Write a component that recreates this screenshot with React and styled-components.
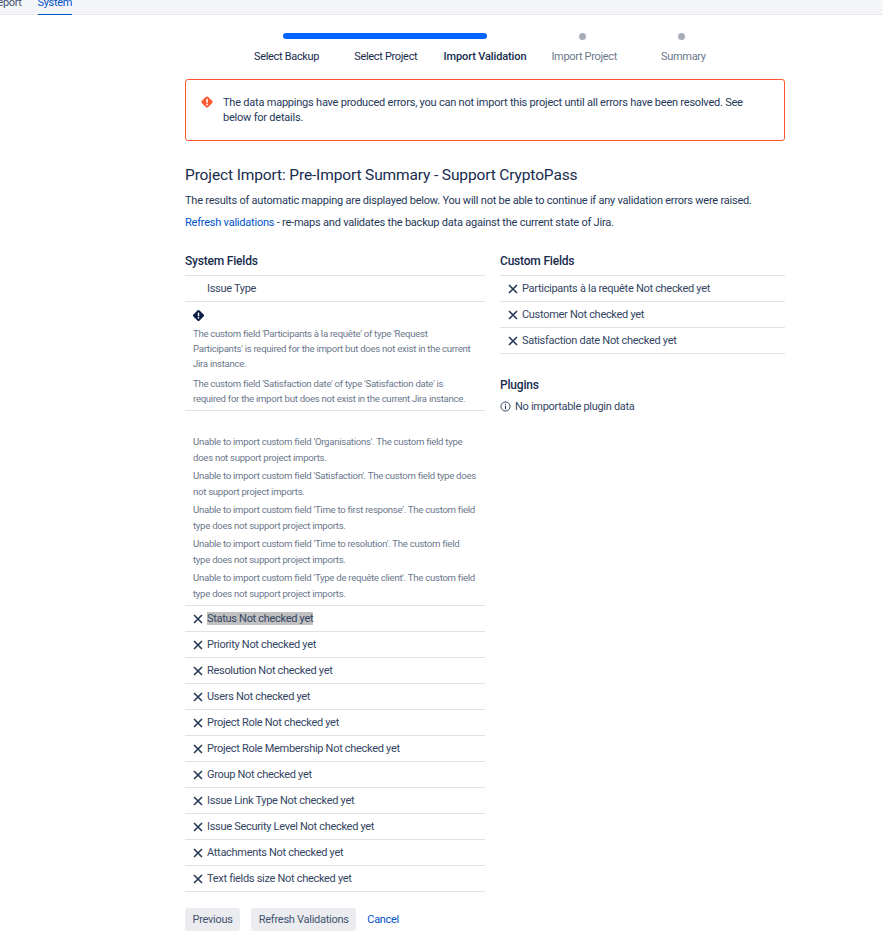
import React from "react";
import styled, { createGlobalStyle } from "styled-components";

const GlobalStyle = createGlobalStyle`
  html, body {
    margin: 0;
    padding: 0;
    height: 932px;
    overflow: hidden;
    background: #fff;
    font-family: Roboto, "Noto Sans", sans-serif;
    font-size: 11px;
    letter-spacing: -0.3px;
    color: #172b4d;
  }
`;

const TopBar = styled.div`
  height: 14px;
  display: flex;
  align-items: flex-start;
  background: #f4f5f7;
  border-bottom: 1px solid #e6e8ec;
`;

const Tab = styled.div`
  height: 15px;
  margin-left: ${(p) => p.$left}px;
  line-height: 5px;
  font-size: 11px;
  letter-spacing: -0.35px;
  color: ${(p) => (p.$active ? "#0052cc" : "#42526e")};
  overflow: hidden;
  box-shadow: ${(p) => (p.$active ? "inset 0 -1px 0 #0052cc" : "none")};
`;

const Main = styled.div`
  width: 600px;
  margin-left: 185px;
`;

const Stepper = styled.div`
  display: grid;
  grid-template-columns: repeat(5, 1fr);
  padding: 18px 52px 0;
  height: 64px;
  grid-template-rows: 6px auto;
  row-gap: 10px;
  box-sizing: border-box;
`;

const Track = styled.div`
  grid-column: 1 / 4;
  height: 6px;
  margin: 0 48px 0 46px;
  border-radius: 3px;
  background: #0065ff;
`;

const DotCell = styled.div`
  display: flex;
  justify-content: center;
  align-items: center;
`;

const Dot = styled.span`
  width: 7px;
  height: 7px;
  margin-right: 3px;
  border-radius: 50%;
  background: #a5adba;
`;

const StepLabel = styled.div`
  grid-row: 2;
  text-align: center;
  line-height: 16px;
  font-size: 11px;
  white-space: nowrap;
  letter-spacing: ${(p) => (p.$current ? "-0.13px" : "-0.32px")};
  font-weight: ${(p) => (p.$current ? 500 : 400)};
  color: ${(p) => (p.$todo ? "#6b778c" : "#172b4d")};
`;

const ErrorBox = styled.div`
  display: flex;
  box-sizing: border-box;
  height: 62px;
  padding: 15px 15px 0 15px;
  border: 1px solid #ff5630;
  border-radius: 3px;
`;

const ErrorIcon = styled.svg`
  flex: none;
  width: 12px;
  height: 12px;
  margin: 1px 10px 0 0;
`;

const ErrorText = styled.div`
  line-height: 15px;
  letter-spacing: -0.22px;
  color: #253858;
`;

const Title = styled.h2`
  margin: 24px 0 0;
  font-size: 15.5px;
  letter-spacing: -0.13px;
  line-height: 20px;
  font-weight: 400;
  color: #172b4d;
`;

const Intro = styled.p`
  margin: ${(p) => p.$top}px 0 0;
  line-height: 16px;
  letter-spacing: -0.22px;
  color: #253858;
`;

const IntroLink = styled.a`
  color: #0052cc;
`;

const Columns = styled.div`
  display: grid;
  grid-template-columns: 300px 285px;
  column-gap: 15px;
  margin-top: 22px;
`;

const Heading = styled.h3`
  margin: ${(p) => p.$top || 0}px 0 0;
  height: 16px;
  font-size: 12px;
  letter-spacing: -0.2px;
  line-height: 16px;
  font-weight: 500;
  color: #172b4d;
`;

const FieldList = styled.div`
  margin-top: 6px;
  border-top: 1px solid #dfe1e6;
`;

const Row = styled.div`
  display: flex;
  align-items: center;
  height: 25px;
  padding-left: 8px;
  border-bottom: 1px solid #dfe1e6;
  color: #344563;
`;

const CrossIcon = styled.svg`
  flex: none;
  width: 10px;
  height: 10px;
  margin: 1px 4px 0 0;
`;

const IconGap = styled.span`
  width: 14px;
`;

const RowText = styled.span`
  background: ${(p) => (p.$selected ? "#c0c0c0" : "transparent")};
`;

const MessageBlock = styled.div`
  padding: ${(p) => p.$top}px 8px ${(p) => p.$bottom}px;
  border-bottom: 1px solid #dfe1e6;
`;

const BlockIcon = styled.svg`
  display: block;
  width: 11px;
  height: 11px;
  margin: 1px 0 5px;
`;

const Message = styled.p`
  margin: 0 0 ${(p) => p.$gap}px;
  font-size: 9.6px;
  letter-spacing: -0.28px;
  line-height: ${(p) => p.$line}px;
  color: #6b778c;
`;

const PluginLine = styled.div`
  display: flex;
  align-items: center;
  margin-top: 7px;
  color: #344563;
`;

const InfoIcon = styled.svg`
  flex: none;
  width: 11px;
  height: 11px;
  margin-right: 4px;
`;

const Actions = styled.div`
  display: flex;
  align-items: center;
  margin-top: 16px;
`;

const Button = styled.div`
  height: 23px;
  padding: 0 7.5px;
  margin-right: 11px;
  line-height: 23px;
  letter-spacing: -0.26px;
  border-radius: 3px;
  background: #ebecf0;
  color: #42526e;
`;

const CancelLink = styled.a`
  color: #0052cc;
`;

const Cross = () => (
  <CrossIcon viewBox="0 0 10 10">
    <path d="M1 1l8 8M9 1L1 9" stroke="#253858" strokeWidth="1.6" fill="none" />
  </CrossIcon>
);

const systemRows = [
  "Status", "Priority", "Resolution", "Users", "Project Role",
  "Project Role Membership", "Group", "Issue Link Type",
  "Issue Security Level", "Attachments", "Text fields size",
];
const customRows = ["Participants à la requête", "Customer", "Satisfaction date"];
const unsupported = [
  "Organisations", "Satisfaction", "Time to first response",
  "Time to resolution", "Type de requête client",
];

export default function App() {
  return (
    <>
      <GlobalStyle />
      <TopBar>
        <Tab $left={-9}>Report</Tab>
        <Tab $left={16} $active>System</Tab>
      </TopBar>
      <Main>
        <Stepper>
          <Track />
          <DotCell><Dot /></DotCell>
          <DotCell><Dot /></DotCell>
          <StepLabel>Select Backup</StepLabel>
          <StepLabel>Select Project</StepLabel>
          <StepLabel $current>Import Validation</StepLabel>
          <StepLabel $todo>Import Project</StepLabel>
          <StepLabel $todo>Summary</StepLabel>
        </Stepper>
        <ErrorBox>
          <ErrorIcon viewBox="0 0 12 12">
            <path d="M6 .5l1.2.5L11 4.8a1.6 1.6 0 010 2.4L7.2 11a1.6 1.6 0 01-2.4 0L1 7.2a1.6 1.6 0 010-2.4L4.8 1z" fill="#ff5630" />
            <rect x="5.2" y="2.8" width="1.6" height="4" rx=".6" fill="#fff" />
            <circle cx="6" cy="8.5" r=".9" fill="#fff" />
          </ErrorIcon>
          <ErrorText>
            The data mappings have produced errors, you can not import this project until all errors have been resolved. See below for details.
          </ErrorText>
        </ErrorBox>
        <Title>Project Import: Pre-Import Summary - Support CryptoPass</Title>
        <Intro $top={8}>The results of automatic mapping are displayed below. You will not be able to continue if any validation errors were raised.</Intro>
        <Intro $top={6}><IntroLink>Refresh validations</IntroLink> - re-maps and validates the backup data against the current state of Jira.</Intro>
        <Columns>
          <div>
            <Heading>System Fields</Heading>
            <FieldList>
              <Row><IconGap /><RowText>Issue Type</RowText></Row>
              <MessageBlock $top={7} $bottom={4}>
                <BlockIcon viewBox="0 0 12 12">
                  <path d="M6 0l1.2.5L11.5 4.8a1.6 1.6 0 010 2.4L7.2 11.5a1.6 1.6 0 01-2.4 0L.5 7.2a1.6 1.6 0 010-2.4L4.8.5z" fill="#091e42" />
                  <rect x="5.2" y="2.6" width="1.6" height="4.2" rx=".6" fill="#fff" />
                  <circle cx="6" cy="8.6" r=".9" fill="#fff" />
                </BlockIcon>
                <Message $line={15} $gap={5}>The custom field 'Participants à la requête' of type 'Request Participants' is required for the import but does not exist in the current Jira instance.</Message>
                <Message $line={15} $gap={0}>The custom field 'Satisfaction date' of type 'Satisfaction date' is required for the import but does not exist in the current Jira instance.</Message>
              </MessageBlock>
              <MessageBlock $top={23} $bottom={1}>
                {unsupported.map((name) => (
                  <Message key={name} $line={16} $gap={2}>Unable to import custom field '{name}'. The custom field type does not support project imports.</Message>
                ))}
              </MessageBlock>
              {systemRows.map((name, i) => (
                <Row key={name}><Cross /><RowText $selected={i === 0}>{name} Not checked yet</RowText></Row>
              ))}
            </FieldList>
            <Actions>
              <Button>Previous</Button>
              <Button>Refresh Validations</Button>
              <CancelLink>Cancel</CancelLink>
            </Actions>
          </div>
          <div>
            <Heading>Custom Fields</Heading>
            <FieldList>
              {customRows.map((name) => (
                <Row key={name}><Cross /><RowText>{name} Not checked yet</RowText></Row>
              ))}
            </FieldList>
            <Heading $top={23}>Plugins</Heading>
            <PluginLine>
              <InfoIcon viewBox="0 0 12 12">
                <circle cx="6" cy="6" r="5" fill="none" stroke="#253858" strokeWidth="1" />
                <rect x="5.4" y="5" width="1.2" height="4" fill="#253858" />
                <circle cx="6" cy="3.4" r=".8" fill="#253858" />
              </InfoIcon>
              No importable plugin data
            </PluginLine>
          </div>
        </Columns>
      </Main>
    </>
  );
}
